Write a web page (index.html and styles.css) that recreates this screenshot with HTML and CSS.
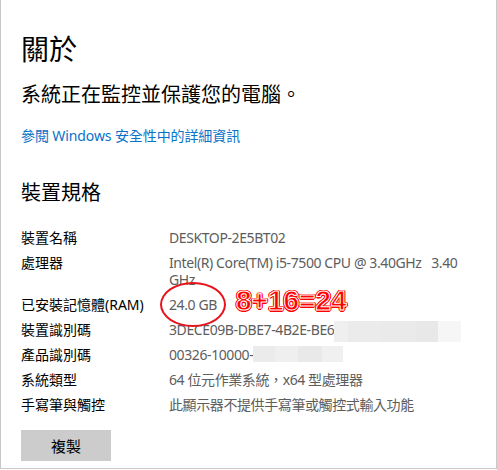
FILE: index.html
```html
<!DOCTYPE html>
<html lang="zh-Hant">
<head>
  <meta charset="UTF-8">
  <title>關於</title>
  <link rel="stylesheet" href="styles.css">
</head>
<body>
  <div class="about-window">
    <h1 class="page-title">關於</h1>
    <p class="status-text">系統正在監控並保護您的電腦。</p>
    <a class="details-link" href="#">參閱 Windows 安全性中的詳細資訊</a>

    <h2 class="section-title">裝置規格</h2>

    <!-- Device specs -->
    <div class="spec-list">
      <div class="spec-label">裝置名稱</div>
      <div class="spec-value">DESKTOP-2E5BT02</div>

      <div class="spec-label">處理器</div>
      <div class="spec-value">Intel(R) Core(TM) i5-7500 CPU @ 3.40GHz&nbsp;&nbsp; 3.40 GHz</div>

      <div class="spec-label">已安裝記憶體(RAM)</div>
      <div class="spec-value ram-value">24.0 GB
        <span class="mark-circle"></span>
        <span class="mark-note">8+16=24</span>
      </div>

      <div class="spec-label">裝置識別碼</div>
      <div class="spec-value nowrap">3DECE09B-DBE7-4B2E-BE6<span class="blur blur-id"><i></i><i></i><i></i><i></i><i></i></span></div>

      <div class="spec-label">產品識別碼</div>
      <div class="spec-value nowrap">00326-10000-<span class="blur blur-product"><i></i><i></i><i></i><i></i></span></div>

      <div class="spec-label">系統類型</div>
      <div class="spec-value">64 位元作業系統，x64 型處理器</div>

      <div class="spec-label">手寫筆與觸控</div>
      <div class="spec-value">此顯示器不提供手寫筆或觸控式輸入功能</div>
    </div>

    <button class="copy-btn">複製</button>
  </div>
</body>
</html>
```

FILE: styles.css
```css
/* About page */
body {
  margin: 0;
  padding: 0;
  background-color: #fff;
  font-family: "Noto Sans", "Noto Sans CJK TC", sans-serif;
  color: #000;
}

.about-window {
  box-sizing: border-box;
  width: 497px;
  height: 469px;
  padding: 31px 27px 0 20px;
  border: 1px solid #c8c8c8;
  border-top: none;
  overflow: hidden;
}

.page-title {
  margin: 0;
  font-size: 28px;
  font-weight: normal;
  line-height: 36px;
}

.status-text {
  margin: 14px 0 0 0;
  font-size: 20px;
  line-height: 28px;
}

.details-link {
  display: block;
  margin-top: 17px;
  font-size: 14px;
  line-height: 20px;
  letter-spacing: -0.1px;
  color: #0a72c8;
  text-decoration: none;
}

.section-title {
  margin: 33px 0 0 0;
  font-size: 20px;
  font-weight: normal;
  line-height: 28px;
}

.spec-list {
  display: grid;
  grid-template-columns: 148px 1fr;
  row-gap: 8px;
  margin-top: 22px;
  font-size: 14px;
  line-height: 17px;
}

.spec-label {
  color: #000;
}

.spec-value {
  color: #5d5d5d;
  letter-spacing: -0.4px;
}

.nowrap {
  white-space: nowrap;
}

.ram-value {
  position: relative;
}

.mark-circle {
  position: absolute;
  left: -9px;
  top: -14px;
  width: 62px;
  height: 41px;
  border: 2px solid #e8141c;
  border-radius: 50%;
}

.mark-note {
  position: absolute;
  left: 67px;
  top: -8px;
  font-family: "Liberation Sans", sans-serif;
  font-size: 28px;
  font-weight: bold;
  line-height: 26px;
  letter-spacing: 0;
  color: #f00;
  -webkit-text-stroke: 1px #fff;
  text-shadow: 1.5px 0 #f00, -1.5px 0 #f00, 0 1.5px #f00, 0 -1.5px #f00,
    1px 1px #f00, -1px -1px #f00, 1px -1px #f00, -1px 1px #f00;
  white-space: nowrap;
}

/* redacted ids */
.blur {
  display: inline-flex;
  vertical-align: top;
}

.blur i {
  display: block;
}

.blur-id {
  height: 21px;
  margin-bottom: -4px;
}
.blur-id i:nth-child(1) { width: 14px; background: #efefef; }
.blur-id i:nth-child(2) { width: 33px; background: #ebebeb; }
.blur-id i:nth-child(3) { width: 35px; background: #eaeaea; }
.blur-id i:nth-child(4) { width: 22px; background: #e8e8e8; }
.blur-id i:nth-child(5) { width: 23px; background: #f6f6f6; }

.blur-product {
  height: 16px;
}
.blur-product i:nth-child(1) { width: 22px; background: #ebebeb; }
.blur-product i:nth-child(2) { width: 23px; background: #efefef; }
.blur-product i:nth-child(3) { width: 24px; background: #e9e9e9; }
.blur-product i:nth-child(4) { width: 21px; background: #f0f0f0; }

.copy-btn {
  display: block;
  width: 90px;
  height: 31px;
  margin-top: 17px;
  padding: 0;
  background-color: #cccccc;
  border: none;
  font-family: "Noto Sans CJK TC", sans-serif;
  font-size: 15px;
  color: #000;
}
```
